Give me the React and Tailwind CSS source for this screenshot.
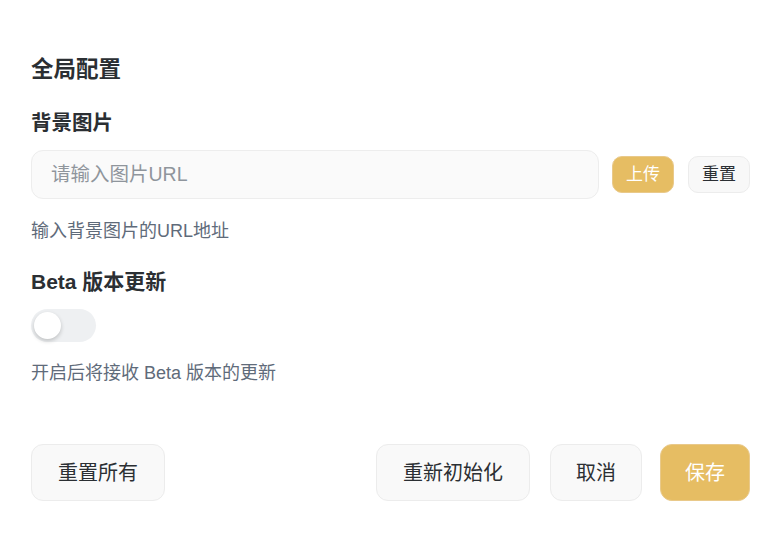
import React, { useState } from "react";

export default function App() {
  const [on, setOn] = useState(false);
  const font = { fontFamily: '"Liberation Sans", "Noto Sans CJK SC", sans-serif' };
  return (
    <div className="w-[782px] h-[534px] bg-white overflow-hidden" style={font}>
      <div className="flex flex-col pl-[31px] pr-[32px] pt-[55px]">
        <h1 className="text-[22.5px] leading-[30px] font-semibold text-[#2b2f33]">全局配置</h1>

        <div className="mt-[24px] text-[20.5px] leading-[28px] font-semibold text-[#2b2f33]">背景图片</div>
        <div className="mt-[13px] flex items-center">
          <input
            className="flex-1 h-[49px] rounded-[12px] border border-[#ededed] bg-[#fafafa] px-[19px] text-[19.5px] text-[#2b2f33] placeholder:text-[#8f959c] outline-none"
            placeholder="请输入图片URL"
          />
          <button className="ml-[13px] h-[37px] px-[13px] rounded-[10px] bg-[#e6bd63] border border-[#e9c98a] text-white text-[17px] leading-none">
            上传
          </button>
          <button className="ml-[14px] h-[37px] px-[13px] rounded-[10px] bg-[#f8f8f8] border border-[#ececec] text-[#2b2f33] text-[17px] leading-none">
            重置
          </button>
        </div>
        <div className="mt-[20px] text-[18px] leading-[24px] text-[#5f6b7a]">输入背景图片的URL地址</div>

        <div className="mt-[25px] text-[21px] leading-[28px] font-semibold text-[#2b2f33]">Beta 版本更新</div>
        <div className="mt-[13px]">
          <button
            onClick={() => setOn(!on)}
            className="relative w-[65px] h-[33px] rounded-full bg-[#eef0f2] flex items-center px-[3px]"
          >
            <span className="w-[27px] h-[27px] rounded-full bg-white shadow-[0_2px_4px_rgba(0,0,0,0.2)]" />
          </button>
        </div>
        <div className="mt-[19px] text-[18px] leading-[24px] text-[#5f6b7a]">开启后将接收 Beta 版本的更新</div>

        <div className="mt-[59px] flex items-center">
          <button className="h-[57px] px-[26px] rounded-[12px] bg-[#f9f9f9] border border-[#ececec] text-[20px] text-[#2b2f33]">
            重置所有
          </button>
          <div className="flex-1" />
          <button className="h-[57px] px-[26px] rounded-[12px] bg-[#f9f9f9] border border-[#ececec] text-[20px] text-[#2b2f33]">
            重新初始化
          </button>
          <button className="ml-[20px] h-[57px] px-[25px] rounded-[12px] bg-[#f9f9f9] border border-[#ececec] text-[20px] text-[#2b2f33]">
            取消
          </button>
          <button className="ml-[18px] h-[57px] px-[24px] rounded-[12px] bg-[#e6bd63] border border-[#e9c98a] text-[20px] text-white">
            保存
          </button>
        </div>
      </div>
    </div>
  );
}
